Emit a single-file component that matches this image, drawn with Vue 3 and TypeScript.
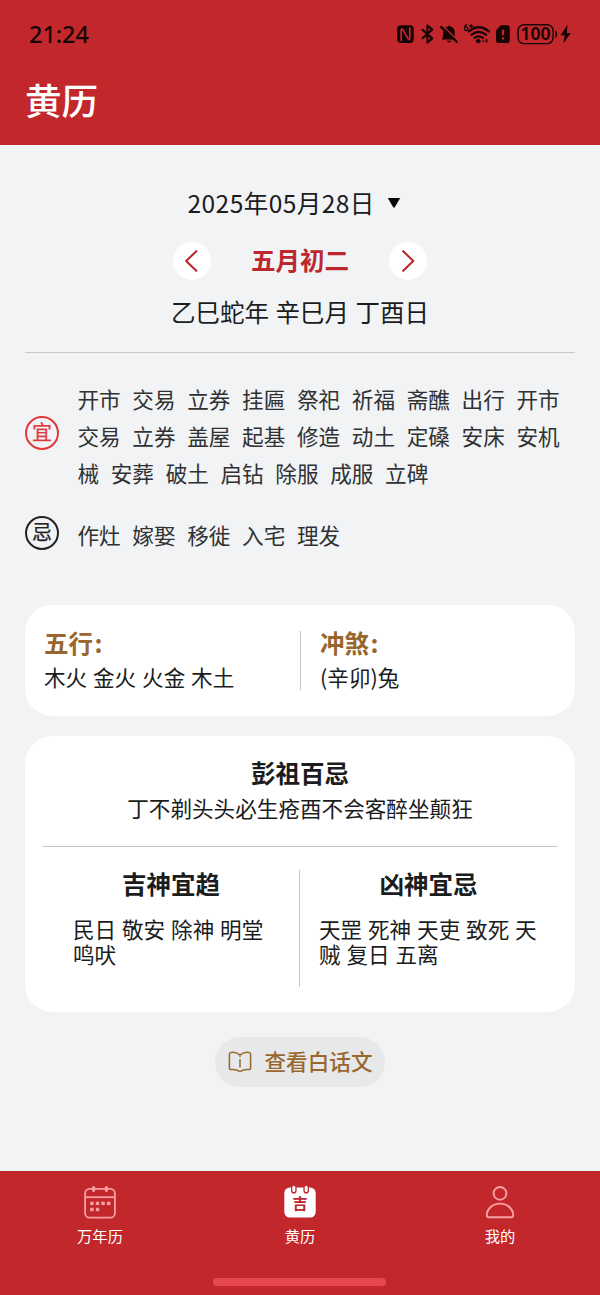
<script setup lang="ts">
const suitable: string[] = [
  '开市  交易  立券  挂匾  祭祀  祈福  斋醮  出行  开市',
  '交易  立券  盖屋  起基  修造  动土  定磉  安床  安机',
  '械  安葬  破土  启钻  除服  成服  立碑',
]
const avoid: string[] = ['作灶  嫁娶  移徙  入宅  理发']
const luckyGods = '民日 敬安 除神 明堂\n鸣吠'
const unluckyGods = '天罡 死神 天吏 致死 天\n贼 复日 五离'
const calendarDots: Array<[number, number]> = [
  [6.2, 16.2], [11.8, 16.2], [17.4, 16.2], [23, 16.2], [6.2, 22.3], [11.8, 22.3],
]
</script>

<template>
  <div class="screen">
    <header class="header">
      <div class="status">
        <span class="clock">21:24</span>
        <svg class="status-icons" width="176" height="24" viewBox="0 0 176 24">
          <g>
            <rect x="2.2" y="3.3" width="16.6" height="17.6" rx="3.6" fill="#180405" />
            <path d="M6.2 19V8.4Q6.2 5.4 8 8L12.8 16.4Q14.8 19 14.8 15.8V5.2" fill="none" stroke="#c2272c" stroke-width="1.7" />
          </g>
          <path d="M27 7.2L37.2 16.4L32.4 20.6V3.5L37.2 7.6L27 16.8" fill="none" stroke="#180405" stroke-width="2.1" stroke-linejoin="round" />
          <g fill="#180405">
            <path d="M46.6 17.6Q48.2 16 48.2 13V10.8Q48.2 5.4 53 4.5Q54 2.4 55.1 4.5Q59.8 5.4 59.8 10.8V13Q59.8 16 61.6 17.6Z" />
            <path d="M51.4 18.8H56.8Q54.1 22.2 51.4 18.8Z" />
            <path d="M47.2 3.6L63 18.6" stroke="#c2272c" stroke-width="1.6" />
            <path d="M46 4.9L61.8 19.9" stroke="#180405" stroke-width="2.2" stroke-linecap="round" />
          </g>
          <g fill="none" stroke="#180405" stroke-linecap="round" transform="translate(-3.2 0)">
            <path d="M77 9.4Q87 1.2 97 9.4" stroke-width="2.3" />
            <path d="M79.7 12.8Q87 7 94.3 12.8" stroke-width="2.2" />
            <path d="M82.6 16Q87 12.8 91.2 16" stroke-width="2.1" />
            <circle cx="86.4" cy="19" r="1.8" fill="#180405" stroke-width="1" />
            <path d="M90.6 19H92.6M94.4 17.4V20.6L96 19Z" stroke-width=".9" />
          </g>
          <path d="M72 2Q69.6 3.6 69.5 6.2M74 4H78.2M76.1 1.9V6.1" fill="none" stroke="#180405" stroke-width="1.3" />
          <circle cx="71.2" cy="6.9" r="1.7" fill="none" stroke="#180405" stroke-width="1.3" />
          <path d="M105.8 3.3H112Q114.8 3.3 114.8 6.1V18.2Q114.8 21.1 112 21.1H103.8Q101 21.1 101 18.2V8.4Z" fill="#180405" />
          <path d="M108 7.7V13.3M108 15.4V17.6" stroke="#c2272c" stroke-width="2.3" />
          <rect x="123.1" y="2.8" width="35" height="18.8" rx="5.8" fill="none" stroke="#180405" stroke-width="1.4" />
          <text x="140.6" y="18.4" text-anchor="middle" class="charge">100</text>
          <path d="M161 9.8Q162.6 12.2 161 14.6Z" fill="#180405" stroke="#180405" stroke-width="1.2" />
          <path d="M172.6 2.8L165.6 13.2H169.6L168.4 21.4L175.8 10.9H171.8Z" fill="#180405" />
        </svg>
      </div>
      <h1 class="title">黄历</h1>
    </header>

    <main class="main">
      <div class="date">
        <span>2025年05月28日</span>
        <svg width="14" height="12" viewBox="0 0 14 12"><path d="M.8 1H13.2L7.8 10.3Q7 11.2 6.2 10.3Z" fill="#050505" /></svg>
      </div>
      <div class="lunar">
        <button class="arrow" aria-label="前一天">
          <svg width="38" height="38" viewBox="0 0 38 38"><path d="M23.3 9.2L13.2 19L23.3 28.8" /></svg>
        </button>
        <strong>五月初二</strong>
        <button class="arrow" aria-label="后一天">
          <svg width="38" height="38" viewBox="0 0 38 38"><path d="M14.2 9.2L24.3 19L14.2 28.8" /></svg>
        </button>
      </div>
      <div class="ganzhi">乙巳蛇年 辛巳月 丁酉日</div>
      <div class="rule"></div>

      <section class="advice">
        <span class="stamp good">宜</span>
        <div><p v-for="line in suitable" :key="line">{{ line }}</p></div>
      </section>
      <section class="advice second">
        <span class="stamp bad">忌</span>
        <div><p v-for="line in avoid" :key="line">{{ line }}</p></div>
      </section>

      <section class="card elements">
        <div class="element">
          <h2>五行<i>:</i></h2>
          <p>木火 金火 火金 木土</p>
        </div>
        <div class="element clash">
          <h2>冲煞<i>:</i></h2>
          <p>(辛卯)兔</p>
        </div>
      </section>

      <section class="card taboo">
        <h2>彭祖百忌</h2>
        <p class="saying">丁不剃头头必生疮酉不会客醉坐颠狂</p>
        <div class="gods">
          <div class="god lucky">
            <h2>吉神宜趋</h2>
            <p class="names">{{ luckyGods }}</p>
          </div>
          <div class="god unlucky">
            <h2>凶神宜忌</h2>
            <p class="names">{{ unluckyGods }}</p>
          </div>
        </div>
      </section>

      <button class="plain">
        <svg width="24" height="24" viewBox="0 0 24 24">
          <path d="M12 4.9Q7.5 1.7 3.2 2.4Q1.4 2.7 1.4 4.2V17.7Q1.4 19.7 3.2 19.6Q8 19 12 21.6Q16 19 20.8 19.6Q22.6 19.7 22.6 17.7V4.2Q22.6 2.7 20.8 2.4Q16.5 1.7 12 4.9V6.5M12 9.7V17" fill="none" stroke="#99672d" stroke-width="1.5" stroke-linecap="round" stroke-linejoin="round" />
        </svg>
        <span>查看白话文</span>
      </button>
    </main>

    <nav class="tabs">
      <div class="tab-row">
        <div class="tab">
          <svg width="34" height="34" viewBox="0 0 34 34" fill="none" stroke="#f9a0a2" stroke-width="1.8">
            <rect x="2.1" y="3.9" width="29.8" height="28.8" rx="4.5" />
            <path d="M2 12.2H32" />
            <path d="M10.6 2.4V5.6M23.4 2.4V5.6" stroke-width="3" stroke-linecap="round" />
            <rect v-for="([x, y]) in calendarDots" :key="`${x}-${y}`" :x="x + 1" :y="y + .5" width="3.4" height="3.4" fill="#f9a0a2" stroke="none" />
          </svg>
          <span>万年历</span>
        </div>
        <div class="tab">
          <div class="almanac">
            <svg width="34" height="34" viewBox="0 0 34 34">
              <rect x="1.3" y="2.6" width="31.4" height="30" rx="5.5" fill="#fff" />
              <path d="M10.8 1V5.8M23.2 1V5.8" stroke="#c2272c" stroke-width="5.6" stroke-linecap="round" />
              <path d="M10.8 2.2V5.6M23.2 2.2V5.6" stroke="#fff" stroke-width="3" stroke-linecap="round" />
            </svg>
            <b>吉</b>
          </div>
          <span>黄历</span>
        </div>
        <div class="tab">
          <svg width="34" height="34" viewBox="0 0 34 34" fill="none" stroke="#f9a0a2" stroke-width="1.9">
            <circle cx="17" cy="8.4" r="6.4" />
            <path d="M17 18.6C9 18.6 3.8 24.4 3.8 30.2Q3.8 32.3 6 32.3H28Q30.2 32.3 30.2 30.2C30.2 24.4 25 18.6 17 18.6Z" />
          </svg>
          <span>我的</span>
        </div>
      </div>
      <div class="home-bar"></div>
    </nav>
  </div>
</template>

<style>
body {
  margin: 0;
  background: #f1f3f5;
}
</style>

<style scoped>
.screen {
  width: 600px;
  height: 1295px;
  display: flex;
  flex-direction: column;
  overflow: hidden;
  background: #f1f3f5;
  color: #1b1c1d;
  font-family: "Noto Sans CJK SC", sans-serif;
  font-size: 21.6px;
}
h1, h2, p { margin: 0; }
button { border: 0; padding: 0; font: inherit; }
svg { display: block; flex: none; }
.header {
  height: 145px;
  flex: none;
  background: #c2272c;
}
.status {
  height: 68px;
  padding: 0 29px;
  display: flex;
  align-items: center;
  justify-content: space-between;
}
.clock {
  font: 500 23.4px/30px "Noto Sans", sans-serif;
  color: #180405;
}
.charge {
  font: 600 17.5px "Noto Sans", sans-serif;
  fill: #180405;
}
.title {
  padding-left: 25px;
  color: #fff;
  font-size: 36.6px;
  font-weight: 500;
  line-height: 64px;
}
.main {
  flex: 1;
  padding: 38px 25px 0;
  display: flex;
  flex-direction: column;
}
.date {
  height: 40px;
  padding-left: 162.5px;
  display: flex;
  align-items: center;
  gap: 12px;
  font-size: 24.5px;
  line-height: 40px;
  letter-spacing: 0.45px;
}
.lunar {
  height: 38px;
  margin-top: 19px;
  display: flex;
  justify-content: center;
  align-items: center;
  gap: 40px;
  color: #bd272d;
  font-size: 24.5px;
  line-height: 36px;
}
.lunar strong { height: 38px; }
.arrow {
  width: 38px;
  height: 38px;
  border-radius: 50%;
  background: #fff;
}
.arrow path {
  fill: none;
  stroke: #b9272d;
  stroke-width: 2.1;
  stroke-linecap: round;
  stroke-linejoin: round;
}
.ganzhi {
  height: 36px;
  margin-top: 13px;
  text-align: center;
  font-size: 24.5px;
  line-height: 37px;
  word-spacing: 1px;
}
.rule {
  height: 1px;
  flex: none;
  margin-top: 23px;
  background: #c6c8c9;
}
.advice {
  margin-top: 26.5px;
  display: flex;
  align-items: center;
  gap: 18.5px;
  color: #303132;
}
.advice.second { margin-top: 25px; }
.advice p {
  height: 37.2px;
  line-height: 37.2px;
  white-space: pre;
  word-spacing: 1px;
}
.stamp {
  box-sizing: border-box;
  width: 34px;
  height: 34px;
  flex: none;
  margin-top: -4px;
  border: 2px solid currentColor;
  border-radius: 50%;
  text-align: center;
  font-size: 20px;
  font-weight: 400;
  line-height: 28px;
  -webkit-text-stroke: 0.25px currentColor;
}
.good { color: #e2383b; }
.bad { color: #222; }
.card {
  box-sizing: border-box;
  flex: none;
  border-radius: 27px;
  background: #fff;
}
.card h2 {
  font-size: 24.5px;
  font-weight: 700;
  line-height: 36px;
}
.card h2 i {
  margin-left: 1.5px;
  font-style: normal;
}
.card p { word-spacing: 1px; }
.elements {
  height: 111px;
  margin-top: 52px;
  padding: 20px 19px;
  display: grid;
  grid-template-columns: 256px 1fr;
}
.element h2 {
  color: #99672d;
  line-height: 36px;
}
.element p {
  height: 33px;
  line-height: 32px;
}
.clash {
  height: 59px;
  margin-top: 6px;
  padding-left: 19px;
  border-left: 1px solid #c4c4c4;
}
.clash h2 { margin-top: -6px; }
.taboo {
  height: 276px;
  margin-top: 20px;
  padding: 19px 18px 0;
  text-align: center;
}
.saying {
  height: 33px;
  padding-bottom: 22px;
  border-bottom: 1px solid #c4c4c4;
  line-height: 33px;
}
.gods {
  display: grid;
  grid-template-columns: 256px 1fr;
  margin-top: 23px;
  text-align: left;
}
.god { height: 117px; }
.god h2 {
  margin-top: -4px;
  text-align: center;
}
.names {
  padding: 14px 0 0 30px;
  line-height: 25px;
  white-space: pre;
}
.unlucky { border-left: 1px solid #c4c4c4; }
.unlucky .names { padding-left: 19px; }
.plain {
  width: 170px;
  height: 50px;
  margin-top: 25px;
  align-self: center;
  display: flex;
  align-items: center;
  justify-content: center;
  gap: 13px;
  border-radius: 25px;
  background: #e6e8e9;
  color: #99672d;
  font-size: 21.6px;
  font-weight: 500;
}
.plain span {
  height: 50px;
  line-height: 48px;
}
.tabs {
  height: 124px;
  flex: none;
  background: #c2272c;
}
.tab-row {
  display: grid;
  grid-template-columns: repeat(3, 1fr);
  height: 107px;
}
.tab {
  padding-top: 14px;
  display: flex;
  flex-direction: column;
  align-items: center;
  color: #fff;
  font-size: 15.3px;
  line-height: 22px;
}
.tab span { margin-top: 5px; }
.almanac { position: relative; }
.almanac b {
  position: absolute;
  inset: 7px 0 auto;
  color: #b9272d;
  text-align: center;
  font-size: 15px;
  line-height: 21px;
}
.home-bar {
  width: 173px;
  height: 8px;
  margin-left: 213px;
  border-radius: 4px;
  background: #e5494e;
}
</style>
